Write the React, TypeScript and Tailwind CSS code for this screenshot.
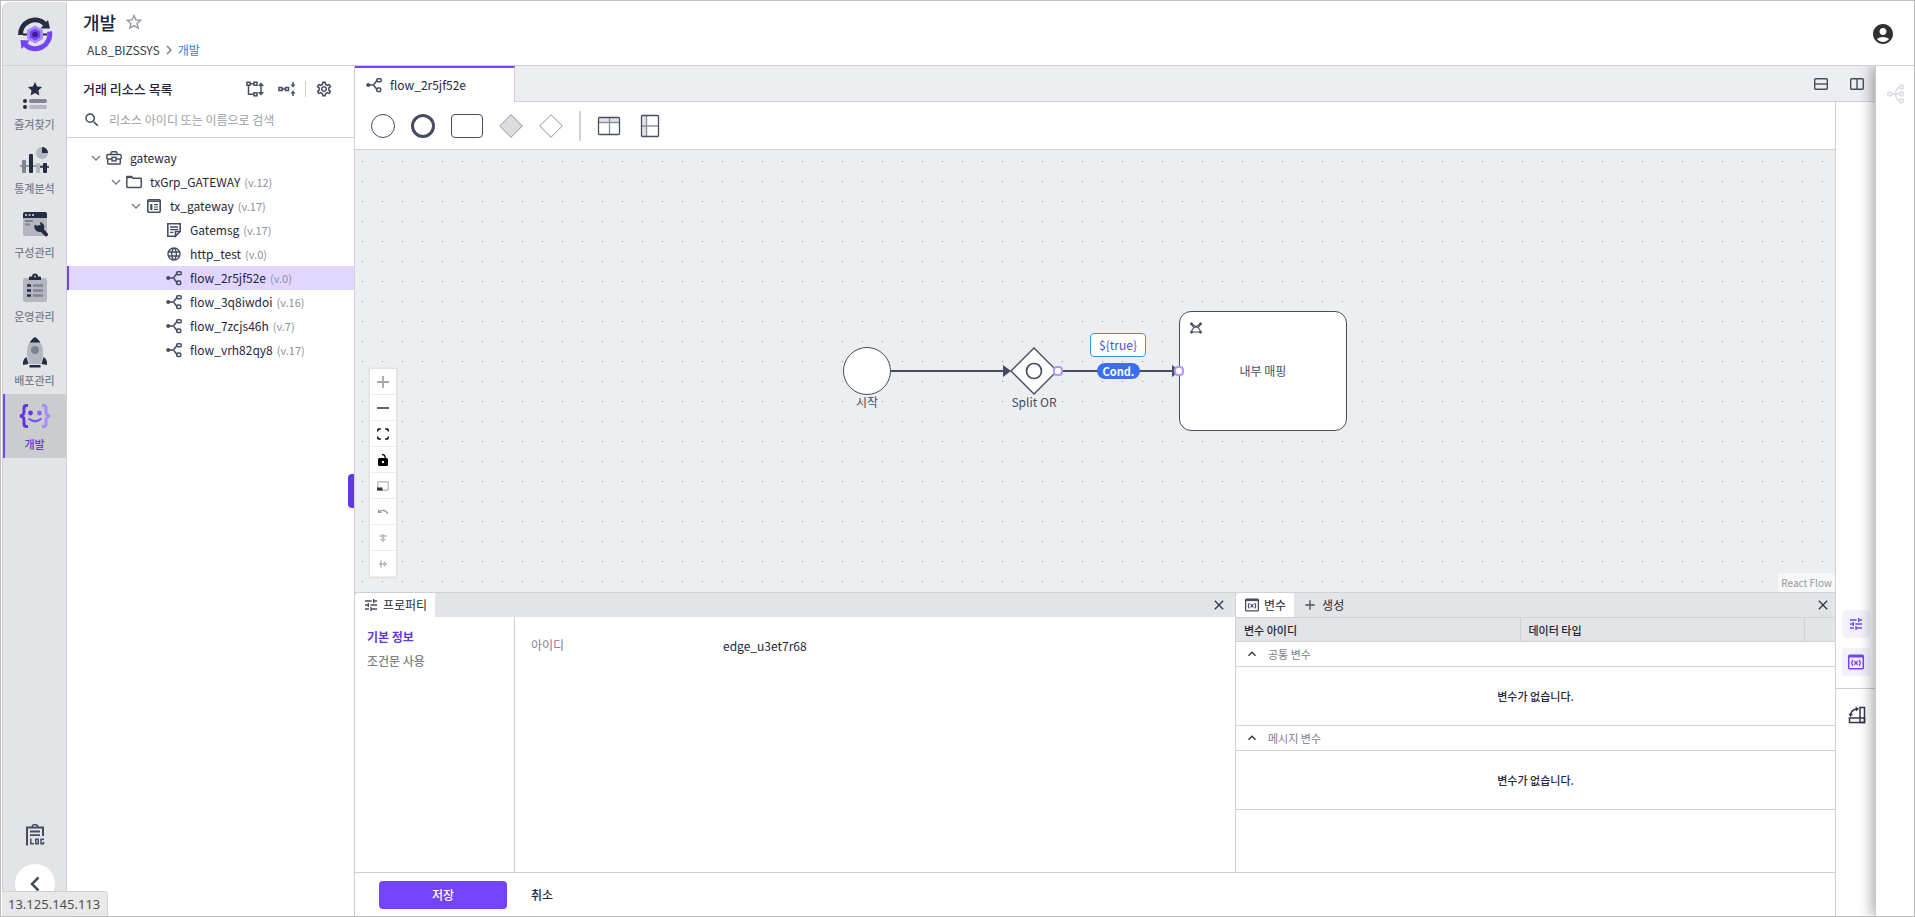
import type { ReactNode } from "react";
import {
  MdAccountCircle,
  MdAdd,
  MdChevronRight,
  MdClose,
  MdExpandLess,
  MdExpandMore,
  MdLanguage,
  MdOutlineSettings,
  MdSearch,
  MdStarBorder,
  MdTune,
} from "react-icons/md";

type IconProps = { className?: string };

function Logo() {
  return (
    <svg viewBox="0 0 36 36" className="h-9 w-9" aria-hidden>
      <path d="M3.500 19A14.500 14.500 0 0 1 28 8" fill="none" stroke="#232c40" strokeWidth="5" />
      <path d="M31 4L33 12.500L23.500 12.500Z" fill="#232c40" />
      <path d="M32.500 15.500A14.500 14.500 0 0 1 8 28.500" fill="none" stroke="#7444fb" strokeWidth="5" />
      <path d="M4.500 33L3.500 24L13 24.500Z" fill="#7444fb" />
      <path d="M6 18.500h24" stroke="#232c40" strokeWidth="2" />
      <path d="M18 9.500l8 4.500v9l-8 4.500l-8-4.500v-9z" fill="#a98bff" />
      <path d="M18 12.500l5.200 3v6l-5.200 3l-5.200-3v-6z" fill="#7444fb" />
      <circle cx="18" cy="18.500" r="2.800" fill="#3a1c96" />
    </svg>
  );
}

function FavoriteIcon() {
  return (
    <svg viewBox="0 0 32 32" className="h-8 w-8" aria-hidden>
      <path d="M16 2l2.100 4.600 5 .5-3.700 3.400 1 5L16 12.900l-4.400 2.600 1-5L8.900 7.100l5-.5z" fill="#232c40" />
      <circle cx="6" cy="21" r="2" fill="#232c40" />
      <circle cx="6" cy="27" r="2" fill="#232c40" />
      <rect x="10" y="19" width="18" height="4" rx="2" fill="#7f8590" />
      <rect x="10" y="25" width="18" height="4" rx="2" fill="#b4b7c0" />
    </svg>
  );
}

function StatsIcon() {
  return (
    <svg viewBox="0 0 32 32" className="h-8 w-8" aria-hidden>
      <circle cx="23" cy="9" r="6" fill="#b4b7c0" />
      <path d="M23 3a6 6 0 0 1 6 6h-6z" fill="#232c40" />
      <path d="M1 22h27" stroke="#7f8590" strokeWidth="1.500" />
      <rect x="3" y="16" width="4" height="13" rx="1" fill="#7f8590" />
      <rect x="10" y="10" width="4" height="19" rx="1" fill="#232c40" />
      <rect x="17" y="19" width="4" height="10" rx="1" fill="#b4b7c0" />
      <path d="M21 23h9" stroke="#232c40" strokeWidth="1.500" />
      <rect x="24" y="19" width="4" height="10" rx="1" fill="#232c40" />
    </svg>
  );
}

function ConfigIcon() {
  return (
    <svg viewBox="0 0 32 32" className="h-8 w-8" aria-hidden>
      <rect x="4" y="4" width="24" height="24" rx="2" fill="#b4b7c0" />
      <path d="M4 10V6a2 2 0 0 1 2-2h20a2 2 0 0 1 2 2v4z" fill="#232c40" />
      <path d="M6 7h2M9.500 7h2M13 7h2" stroke="#e3e4e8" strokeWidth="1.500" />
      <path d="M6 13h8M6 16.500h5" stroke="#7f8590" strokeWidth="1.800" />
      <path d="M20 19l7 7.500" stroke="#232c40" strokeWidth="4" strokeLinecap="round" />
      <path d="M16 16.500l3.500 2.500 2-1.500-.5-3.500a5 5 0 1 1-5 2.500z" fill="#232c40" />
    </svg>
  );
}

function OperationIcon() {
  return (
    <svg viewBox="0 0 32 32" className="h-8 w-8" aria-hidden>
      <rect x="4" y="6" width="24" height="24" rx="2" fill="#b4b7c0" />
      <path d="M10 8V5.500q0-1 1-1h2a3 3 0 0 1 6 0h2q1 0 1 1V8z" fill="#232c40" />
      <circle cx="16" cy="4.500" r="1" fill="#b4b7c0" />
      <path d="M8 13.500h4M8 18.500h4M8 23.500h4" stroke="#232c40" strokeWidth="2.600" />
      <path d="M14 13.500h10M14 18.500h10M14 23.500h10" stroke="#7f8590" strokeWidth="2.600" />
    </svg>
  );
}

function DeployIcon() {
  return (
    <svg viewBox="0 0 32 32" className="h-8 w-8" aria-hidden>
      <path d="M16 1q9 6 8 18l-2 9H10l-2-9Q7 7 16 1z" fill="#b4b7c0" />
      <path d="M16 1q3.500 2 5.500 5.500h-11Q12.500 3 16 1z" fill="#232c40" />
      <circle cx="16" cy="14" r="4" fill="#7f8590" />
      <path d="M7.500 21l2 7-5.500 1v-3q.5-3.500 3.500-5zM24.500 21l-2 7 5.500 1v-3q-.5-3.500-3.500-5z" fill="#232c40" />
      <rect x="10.500" y="29" width="11" height="2.500" fill="#232c40" />
    </svg>
  );
}

function DevelopIcon() {
  return (
    <svg viewBox="0 0 32 32" className="h-8 w-8" fill="none" aria-hidden>
      <path d="M9 5.500H7.500Q5 5.500 5 8v4q0 3.500-4 4 4 .5 4 4v4q0 2.500 2.500 2.500H9" stroke="#6338e0" strokeWidth="3" />
      <path d="M23 5.500h1.500Q27 5.500 27 8v4q0 3.500 4 4-4 .5-4 4v4q0 2.500-2.500 2.500H23" stroke="#a98bff" strokeWidth="3" />
      <circle cx="11.500" cy="13" r="2.400" fill="#6338e0" />
      <path d="M20.500 10.500v5M18.300 11.700l4.400 2.600M22.700 11.700l-4.400 2.600" stroke="#8b62ff" strokeWidth="1.500" />
      <path d="M9.500 18.500q6.500 5.500 13 0" stroke="#7d54f5" strokeWidth="2.200" />
    </svg>
  );
}

function LogIcon() {
  return (
    <svg viewBox="0 0 20 22" className="h-[22px] w-5" fill="none" stroke="#454e61" aria-hidden>
      <path d="M3 20.500H2V3.500h16V12" strokeWidth="2" />
      <path d="M7 3.500a3 3 0 0 1 6 0" strokeWidth="1.500" />
      <path d="M5 7.500h10M5 11.200h10" strokeWidth="1.800" />
      <path d="M5.800 14.500v5.200H9M10.800 15.200h2.400v4.500h-2.400zM19 15.200h-3v4.500h2.500v-2" strokeWidth="1.500" />
    </svg>
  );
}

function CaseIcon({ className }: IconProps) {
  return (
    <svg viewBox="0 0 16 16" className={className} fill="none" stroke="#454e61" strokeWidth="1.400" aria-hidden>
      <path d="M5 4.500V3q0-1.200 1.200-1.200h3.600Q11 1.800 11 3v1.500" />
      <rect x=".8" y="4.500" width="14.400" height="4.500" rx="1" />
      <path d="M1.700 9v4.200q0 .8.800.8h11q.8 0 .8-.8V9" />
      <rect x="6" y="7.300" width="4" height="3.600" fill="#fff" />
    </svg>
  );
}

function FolderIcon({ className }: IconProps) {
  return (
    <svg viewBox="0 0 16 16" className={className} fill="none" stroke="#454e61" strokeWidth="1.500" aria-hidden>
      <path d="M.8 12.800V2.700q0-.2.200-.2h4.500l1.700 1.700h7.800q.2 0 .2.200v8.400q0 .7-.7.700h-13q-.7 0-.7-.7z" />
      <path d="M1 3.200h5" strokeWidth="2" />
    </svg>
  );
}

function FlowIcon({ className }: IconProps) {
  return (
    <svg viewBox="0 0 16 16" className={className} fill="none" stroke="#454e61" strokeWidth="1.500" aria-hidden>
      <circle cx="2.200" cy="8" r="2" fill="#454e61" stroke="none" />
      <path d="M3 8h4.500M7.500 8L10.500 4H12M7.500 8l3 4H12" />
      <rect x="10.700" y="1.800" width="4.500" height="3" rx="1" />
      <rect x="10.700" y="11" width="4" height="3.500" rx="1" />
    </svg>
  );
}

function TxIcon({ className }: IconProps) {
  return (
    <svg viewBox="0 0 16 16" className={className} fill="none" stroke="#454e61" aria-hidden>
      <rect x="1.800" y="1.800" width="12.400" height="12.400" rx="1" strokeWidth="1.600" />
      <path d="M2 3.200h12" strokeWidth="1.500" />
      <path d="M5.300 6v6" strokeWidth="2.200" />
      <path d="M8 6.700h4M8 9h4M8 11.300h4" strokeWidth="1.200" />
    </svg>
  );
}

function MessageIcon({ className }: IconProps) {
  return (
    <svg viewBox="0 0 16 16" className={className} fill="none" stroke="#454e61" strokeWidth="1.600" aria-hidden>
      <path d="M9.500 14.200H1.800V1.800h12.400v7.700l-4.700 4.700V9.500h4.700" />
      <path d="M4 5h8M4 7.700h8M4 10.400h3.500" strokeWidth="1.300" />
    </svg>
  );
}

function ExpandTreeIcon() {
  return (
    <svg viewBox="0 0 18 16" className="h-4 w-[18px]" fill="none" stroke="#454e61" strokeWidth="1.500" aria-hidden>
      <rect x="1" y="1.200" width="3" height="3" />
      <rect x="8" y="1.200" width="3" height="3" />
      <rect x="8" y="11.800" width="3" height="3" />
      <path d="M4 2.700h4M2.500 4v9.300H8M15 3v10M12.700 5L15 2.500 17.300 5M12.700 11l2.300 2.500 2.300-2.500" />
    </svg>
  );
}

function CollapseTreeIcon() {
  return (
    <svg viewBox="0 0 18 16" className="h-4 w-[18px]" fill="none" stroke="#454e61" strokeWidth="1.500" aria-hidden>
      <rect x="1" y="6.500" width="3" height="3" />
      <rect x="7.500" y="6.500" width="3" height="3" />
      <path d="M4 8h3.500M15 1v4M15 15v-4" />
      <path d="M12.500 3.500h5L15 6.500zM12.500 12.500h5L15 9.500z" fill="#454e61" stroke="none" />
    </svg>
  );
}

function VariableIcon({ className }: IconProps) {
  return (
    <svg viewBox="0 0 18 16" className={className} fill="none" stroke="currentColor" aria-hidden>
      <rect x="1.700" y="1.200" width="14.600" height="13.600" rx="1" strokeWidth="1.500" />
      <path d="M2 2.300h14" strokeWidth="2.400" />
      <path d="M5.800 5.800q-2 3 0 6M12.200 5.800q2 3 0 6M7.300 7l3.400 3.800M10.700 7l-3.400 3.800" strokeWidth="1.300" />
    </svg>
  );
}

function PanelToggleIcon() {
  return (
    <svg viewBox="0 0 18 18" className="h-[18px] w-[18px]" fill="none" stroke="#2f384c" strokeWidth="1.500" aria-hidden>
      <rect x="12" y="1.500" width="4.500" height="15" />
      <rect x="1.500" y="12" width="15" height="4.500" />
      <path d="M2.500 9.500Q3 4 8.500 3" />
      <path d="M7.500 .5L11 2.800 8 5.500zM.5 7.500L2.600 11 5 8z" fill="#2f384c" stroke="none" />
    </svg>
  );
}

const menus = [
  { label: "즐겨찾기", icon: <FavoriteIcon /> },
  { label: "통계분석", icon: <StatsIcon /> },
  { label: "구성관리", icon: <ConfigIcon /> },
  { label: "운영관리", icon: <OperationIcon /> },
  { label: "배포관리", icon: <DeployIcon /> },
];

function SideRail() {
  return (
    <nav className="flex w-[65px] shrink-0 flex-col rounded-tl-lg border-x border-[#d0d1d8] bg-[#e3e4e8]">
      <a href="#home" aria-label="홈" className="flex h-16 items-center justify-center border-b border-[#d0d1d8]">
        <Logo />
      </a>
      <div className="flex flex-col pt-2">
        {menus.map((menu) => (
          <a key={menu.label} href="#menu" className="flex h-16 flex-col items-center gap-1 pt-1.5 text-[11px] leading-4 font-medium text-[#7b808c]">
            {menu.icon}
            {menu.label}
          </a>
        ))}
        <a href="#dev" className="flex h-16 flex-col items-center gap-1 border-l-2 border-[#7444fb] bg-[#cbccce] pt-1.5 pr-0.5 text-[11px] leading-4 font-medium text-[#6338e0]">
          <DevelopIcon />
          개발
        </a>
      </div>
      <div className="mt-auto flex flex-col items-center gap-[18px] pb-3">
        <button type="button" aria-label="로그">
          <LogIcon />
        </button>
        <button type="button" aria-label="메뉴 접기" className="flex h-10 w-10 items-center justify-center rounded-full bg-white">
          <svg viewBox="0 0 10 16" className="h-4 w-2.5" fill="none" stroke="#454e61" strokeWidth="2.500" aria-hidden>
            <path d="M8.500 1.500L2 8l6.500 6.500" />
          </svg>
        </button>
      </div>
    </nav>
  );
}

function Header() {
  return (
    <header className="flex h-16 shrink-0 items-center justify-between border-b border-[#d0d1d8] pr-[19px] pl-4">
      <div className="flex flex-col gap-1">
        <div className="flex items-center gap-2">
          <h1 className="text-lg leading-7 font-medium text-[#1f2738]">개발</h1>
          <button type="button" aria-label="즐겨찾기 추가">
            <MdStarBorder className="h-5 w-5 text-[#9296a1]" />
          </button>
        </div>
        <div className="flex items-center pl-1 text-xs leading-5">
          <a href="#sys" className="text-[#333b4d]">AL8_BIZSSYS</a>
          <MdChevronRight className="h-[18px] w-[18px] text-[#7b808c]" />
          <a href="#dev" className="text-[#1e88e5]">개발</a>
        </div>
      </div>
      <button type="button" aria-label="내 계정">
        <MdAccountCircle className="h-6 w-6 text-[#303030]" />
      </button>
    </header>
  );
}

const iconClass = "h-4 w-4 shrink-0 text-[#454e61]";

const tree = [
  { name: "gateway", indent: "pl-[18px]", open: true, icon: <CaseIcon className={iconClass} /> },
  { name: "txGrp_GATEWAY", version: "(v.12)", indent: "pl-[38px]", open: true, icon: <FolderIcon className={iconClass} /> },
  { name: "tx_gateway", version: "(v.17)", indent: "pl-[58px]", open: true, icon: <TxIcon className={iconClass} /> },
  { name: "Gatemsg", version: "(v.17)", indent: "pl-[97px]", icon: <MessageIcon className={iconClass} /> },
  { name: "http_test", version: "(v.0)", indent: "pl-[97px]", icon: <MdLanguage className={iconClass} /> },
  { name: "flow_2r5jf52e", version: "(v.0)", indent: "pl-[97px]", selected: true, icon: <FlowIcon className={iconClass} /> },
  { name: "flow_3q8iwdoi", version: "(v.16)", indent: "pl-[97px]", icon: <FlowIcon className={iconClass} /> },
  { name: "flow_7zcjs46h", version: "(v.7)", indent: "pl-[97px]", icon: <FlowIcon className={iconClass} /> },
  { name: "flow_vrh82qy8", version: "(v.17)", indent: "pl-[97px]", icon: <FlowIcon className={iconClass} /> },
];

function ResourcePanel() {
  return (
    <aside className="relative w-72 shrink-0 border-r border-[#d0d1d8]">
      <div className="flex flex-col gap-1.5 border-b border-[#d0d1d8] pt-[11px] pb-[5px]">
        <div className="flex h-6 items-center pr-[21px] pl-4">
          <h2 className="flex-1 text-[13px] font-medium text-[#1f2738]">거래 리소스 목록</h2>
          <button type="button" aria-label="모두 펼치기"><ExpandTreeIcon /></button>
          <button type="button" aria-label="모두 접기" className="ml-3.5"><CollapseTreeIcon /></button>
          <span className="mx-[9px] h-4 w-px bg-[#d0d1d8]" />
          <button type="button" aria-label="설정"><MdOutlineSettings className="h-[18px] w-[18px] text-[#454e61]" /></button>
        </div>
        <label className="flex h-[25px] items-center gap-2 px-4">
          <MdSearch className="h-[18px] w-[18px] text-[#454e61]" aria-hidden />
          <input
            type="text"
            aria-label="리소스 검색"
            placeholder="리소스 아이디 또는 이름으로 검색"
            className="flex-1 text-xs outline-none placeholder:text-[#9b9fa9]"
          />
        </label>
      </div>
      <ul className="pt-2 text-xs text-[#1f2738]">
        {tree.map((node) => (
          <li
            key={node.name}
            className={`flex h-6 items-center border-l-2 ${node.indent} ${node.selected ? "border-[#7444fb] bg-[#e0d6ff]" : "border-transparent"}`}
          >
            {node.open && (
              <button type="button" aria-label={`${node.name} 접기`} className="mr-px">
                <MdExpandMore className="h-[18px] w-[18px] text-[#7b808c]" />
              </button>
            )}
            {node.icon}
            <span className="ml-2">{node.name}</span>
            {node.version && <span className="ml-1 text-[11px] text-[#8d919b]">{node.version}</span>}
          </li>
        ))}
      </ul>
      <button type="button" aria-label="목록 접기" className="absolute top-[408px] right-0 h-[34px] w-1.5 rounded-l bg-[#6338e0]" />
    </aside>
  );
}

function TabBar() {
  return (
    <div className="flex h-9 shrink-0">
      <button type="button" className="flex w-40 items-center gap-2 border-t-2 border-r border-t-[#7444fb] border-r-[#d0d1d8] bg-white pl-[11px] text-xs text-[#1f2738]">
        <FlowIcon className={iconClass} />
        flow_2r5jf52e
      </button>
      <div className="flex flex-1 items-center justify-end gap-[22px] border-b border-[#d0d1d8] bg-[#edeef0] pr-[11px]">
        <button type="button" aria-label="가로 분할">
          <svg viewBox="0 0 14 12" className="h-3 w-3.5" fill="none" stroke="#454e61" strokeWidth="1.400" aria-hidden>
            <rect x=".7" y=".7" width="12.600" height="10.600" rx="1" />
            <path d="M1 6h12" />
          </svg>
        </button>
        <button type="button" aria-label="세로 분할">
          <svg viewBox="0 0 14 12" className="h-3 w-3.5" fill="none" stroke="#454e61" strokeWidth="1.400" aria-hidden>
            <rect x=".7" y=".7" width="12.600" height="10.600" rx="1" />
            <path d="M7 1v10" />
          </svg>
        </button>
      </div>
    </div>
  );
}

function Toolbar() {
  return (
    <div className="flex h-12 shrink-0 items-center gap-4 border-b border-[#d0d1d8] bg-white pl-4">
      <button type="button" aria-label="시작" className="h-6 w-6 rounded-full border border-[#454e61]" />
      <button type="button" aria-label="종료" className="h-6 w-6 rounded-full border-3 border-[#454e61]" />
      <button type="button" aria-label="작업" className="h-6 w-8 rounded border border-[#454e61]" />
      <button type="button" aria-label="분기">
        <svg viewBox="0 0 24 24" className="h-6 w-6" fill="#dcdde1" stroke="#8d919b" aria-hidden>
          <path d="M12 .7L23.300 12 12 23.300.7 12z" />
        </svg>
      </button>
      <button type="button" aria-label="병합">
        <svg viewBox="0 0 24 24" className="h-6 w-6" fill="#fff" stroke="#8d919b" aria-hidden>
          <path d="M12 .7L23.300 12 12 23.300.7 12z" />
        </svg>
      </button>
      <span className="h-[30px] w-0.5 bg-[#d0d1d8]" />
      <button type="button" aria-label="가로 레인">
        <svg viewBox="0 0 24 20" className="h-5 w-6" fill="#fff" stroke="#454e61" aria-hidden>
          <path d="M1.500 2h21v4.500h-21z" fill="#e3e4e8" stroke="none" />
          <path d="M2 6.500h20M12.500 2v16" stroke="#8d919b" strokeWidth="1.400" />
          <rect x="1.500" y="1.500" width="21" height="17" rx="1" fill="none" strokeWidth="1.300" />
        </svg>
      </button>
      <button type="button" aria-label="세로 레인">
        <svg viewBox="0 0 24 24" className="h-6 w-6" fill="#fff" stroke="#454e61" aria-hidden>
          <path d="M4 2h5v20H4z" fill="#e3e4e8" stroke="none" />
          <path d="M9.500 2v20M4 12h17" stroke="#8d919b" strokeWidth="1.400" />
          <rect x="4.500" y="1.500" width="17" height="21" rx="1" fill="none" strokeWidth="1.300" />
        </svg>
      </button>
    </div>
  );
}

function ControlButton({ label, children }: { label: string; children: ReactNode }) {
  return (
    <button type="button" aria-label={label} className="flex h-[26px] w-[26px] items-center justify-center border-b border-[#eee] bg-white">
      <svg viewBox="0 0 12 12" className="h-3 w-3" aria-hidden>
        {children}
      </svg>
    </button>
  );
}

function Canvas() {
  return (
    <div className="relative flex-1 overflow-hidden bg-[#edeef0] text-xs text-[#454e61]">
      <svg className="absolute inset-0 h-full w-full" aria-hidden>
        <pattern id="dots" x="7" y="11" width="20" height="20" patternUnits="userSpaceOnUse">
          <rect width="1" height="1" fill="#91919a" />
        </pattern>
        <rect width="100%" height="100%" fill="url(#dots)" />
        <path d="M536 221h112M708 221h116" stroke="#454e61" strokeWidth="2" />
        <path d="M648 215l8 6-8 6zM817 215l8 6-8 6z" fill="#454e61" />
        <path d="M679 198l23 23-23 23-23-23z" fill="#fff" stroke="#454e61" strokeWidth="1.400" />
        <circle cx="679" cy="221" r="7.500" fill="none" stroke="#454e61" strokeWidth="1.700" />
      </svg>

      <div className="absolute top-[197px] left-[488px] h-12 w-12 rounded-full border border-[#454e61] bg-white" />
      <span className="absolute top-[243px] left-[480px] w-16 text-center leading-[18px]">시작</span>
      <span className="absolute top-[243px] left-[639px] w-20 text-center leading-[18px]">Split OR</span>
      <span className="absolute top-[183px] left-[735px] flex h-6 w-14 items-center justify-center rounded border border-[#2f9bf0] bg-white text-[#3b5bc8]">
        {"${true}"}
      </span>
      <span className="absolute top-[213px] left-[742px] flex h-4 w-[43px] items-center justify-center rounded-full bg-[#3b6ef0] text-[11px] font-bold text-white">
        Cond.
      </span>
      <div className="absolute top-[161px] left-[824px] flex h-[120px] w-[168px] items-center justify-center rounded-xl border border-[#454e61] bg-white">
        내부 매핑
        <svg viewBox="0 0 12 12" className="absolute top-2.5 left-2.5 h-3 w-3" fill="#454e61" stroke="#454e61" aria-hidden>
          <path d="M1.500 1.800l4.500 3 4.500-3M1.500 10h9M2 2v1.500l2 2-2 2.500v2M10 2v1.500l-2 2 2 2.500v2M4 5.300h4" fill="none" strokeWidth="1.100" />
          <circle cx="1.500" cy="1.800" r="1" />
          <circle cx="10.500" cy="1.800" r="1" />
          <circle cx="1.500" cy="10.200" r="1" />
          <circle cx="10.500" cy="10.200" r="1" />
        </svg>
      </div>
      <span className="absolute top-[216px] left-[698px] h-2.5 w-2.5 rounded-sm border-2 border-[#b098fb] bg-white" />
      <span className="absolute top-[216px] left-[819px] h-2.5 w-2.5 rounded-sm border-2 border-[#b098fb] bg-white" />

      <div className="absolute bottom-[15px] left-[15px] flex flex-col shadow-[0_0_2px_1px_rgba(0,0,0,0.08)]">
        <ControlButton label="확대"><path d="M6 0v12M0 6h12" stroke="#a6a6a6" strokeWidth="1.800" /></ControlButton>
        <ControlButton label="축소"><path d="M0 6h12" stroke="#000" strokeWidth="1.200" /></ControlButton>
        <ControlButton label="화면 맞춤">
          <path d="M.8 3.500V2q0-1 1-1h2M8.200 1h2q1 0 1 1v1.500M11.200 8.500V10q0 1-1 1h-2M3.800 11h-2q-1 0-1-1V8.500" fill="none" stroke="#000" strokeWidth="1.400" />
        </ControlButton>
        <ControlButton label="잠금 해제">
          <path d="M2.500 4h7q1.500 0 1.500 1.500v5Q11 12 9.500 12h-7Q1 12 1 10.500v-5Q1 4 2.500 4z" />
          <path d="M5 .8q3-.8 3.300 3.500" fill="none" stroke="#000" strokeWidth="1.200" />
          <circle cx="6" cy="8" r="1.200" fill="#fff" />
        </ControlButton>
        <ControlButton label="미니맵">
          <rect x=".7" y="1.700" width="10.600" height="8.600" rx="1" fill="none" stroke="#bdbdbd" strokeWidth="1.400" />
          <rect x="0" y="7.500" width="5.500" height="3" fill="#333" />
        </ControlButton>
        <ControlButton label="실행 취소">
          <path d="M1 3v4h4z" fill="#9a9a9a" />
          <path d="M2.500 6q4-4 8.500 1.500" fill="none" stroke="#9a9a9a" strokeWidth="1.300" />
        </ControlButton>
        <ControlButton label="가로 정렬">
          <path d="M2.500 4h7M3.500 7.500h5" stroke="#b4b7c0" strokeWidth="1.500" />
          <path d="M6 2v8" stroke="#b4b7c0" strokeWidth="1.500" />
        </ControlButton>
        <ControlButton label="세로 정렬">
          <path d="M4 2.500v7M7.500 3.500v5" stroke="#b4b7c0" strokeWidth="1.500" />
          <path d="M2 6h8" stroke="#b4b7c0" strokeWidth="1.500" />
        </ControlButton>
      </div>
      <a href="#reactflow" className="absolute right-0 bottom-0 bg-white/50 px-[3px] py-0.5 text-[10px] leading-[15px] text-[#999]">
        React Flow
      </a>
    </div>
  );
}

function PropertyPanel() {
  return (
    <section className="flex min-w-0 flex-col">
      <div className="flex h-6 items-center bg-[#e3e4e8]">
        <button type="button" className="flex h-full w-20 items-center gap-1 rounded-tl bg-white pl-2 text-xs text-[#1f2738]">
          <MdTune className="h-4 w-4 text-[#454e61]" />
          프로퍼티
        </button>
        <button type="button" aria-label="프로퍼티 닫기" className="mr-2 ml-auto">
          <MdClose className="h-4 w-4 text-[#2f384c]" />
        </button>
      </div>
      <div className="flex flex-1">
        <nav className="flex w-40 shrink-0 flex-col border-r border-[#d0d1d8] pt-2 pl-3 text-xs leading-6">
          <a href="#basic" className="font-bold text-[#6338e0]">기본 정보</a>
          <a href="#condition" className="font-medium text-[#7b808c]">조건문 사용</a>
        </nav>
        <dl className="flex flex-1 pt-[17px] pl-4 text-xs leading-6">
          <dt className="w-48 leading-[22px] text-[#7b808c]">아이디</dt>
          <dd className="text-[#1f2738]">edge_u3et7r68</dd>
        </dl>
      </div>
    </section>
  );
}

function VariablePanel() {
  return (
    <section className="min-w-0 border-l border-[#d0d1d8]">
      <div className="flex h-[25px] items-center border-b border-[#d0d1d8] bg-[#e3e4e8] text-xs text-[#1f2738]">
        <button type="button" className="flex h-full items-center gap-1 rounded-tl bg-white pr-2 pl-2">
          <VariableIcon className="h-3.5 w-4 text-[#454e61]" />
          변수
        </button>
        <button type="button" className="flex items-center gap-1 pl-2">
          <MdAdd className="h-4 w-4 text-[#454e61]" />
          생성
        </button>
        <button type="button" aria-label="변수 닫기" className="mr-1 ml-auto">
          <MdClose className="h-4 w-4 text-[#2f384c]" />
        </button>
      </div>
      <table className="w-full table-fixed border-separate border-spacing-0 text-[11px] leading-4 text-[#1f2738]">
        <thead>
          <tr className="bg-[#e3e4e8] text-left">
            <th className="h-6 border-r border-b border-[#d0d1d8] px-2 py-0 font-medium">변수 아이디</th>
            <th className="border-r border-b border-[#d0d1d8] px-2 py-0 font-medium">데이터 타입</th>
            <td className="w-[30px] border-b border-[#d0d1d8] p-0" />
          </tr>
        </thead>
        {["공통 변수", "메시지 변수"].map((group) => (
          <tbody key={group}>
            <tr>
              <td colSpan={3} className="h-[25px] border-b border-[#d0d1d8] px-2 py-0 text-[#7b808c]">
                <button type="button" className="flex items-center gap-2">
                  <MdExpandLess className="h-4 w-4 text-[#2f384c]" />
                  {group}
                </button>
              </td>
            </tr>
            <tr>
              <td colSpan={3} className="h-[59px] border-b border-[#d0d1d8] p-0 text-center font-medium">
                변수가 없습니다.
              </td>
            </tr>
          </tbody>
        ))}
      </table>
    </section>
  );
}

function ToolStrip() {
  return (
    <div className="flex w-10 shrink-0 flex-col border-l border-[#d0d1d8] bg-white">
      <div className="mt-auto flex flex-col gap-2.5 border-b border-[#d0d1d8] pb-3 pl-1.5">
        <button type="button" aria-label="프로퍼티 패널" className="flex h-7 w-7 items-center justify-center rounded bg-[#f4f1ff] text-[#7444fb]">
          <MdTune className="h-4 w-4" />
        </button>
        <button type="button" aria-label="변수 패널" className="flex h-7 w-7 items-center justify-center rounded bg-[#f4f1ff] text-[#7444fb]">
          <VariableIcon className="h-4 w-[18px]" />
        </button>
      </div>
      <div className="h-[227px] pt-4 pl-3">
        <button type="button" aria-label="패널 위치 변경">
          <PanelToggleIcon />
        </button>
      </div>
    </div>
  );
}

function Drawer() {
  return (
    <aside className="w-[39px] shrink-0 border-l border-[#c8c9cf] bg-white pt-[18px] pl-[11px] shadow-[-4px_0_12px_rgba(0,0,0,0.3)]">
      <button type="button" aria-label="흐름 보기">
        <svg viewBox="0 0 18 20" className="h-5 w-[18px]" fill="none" stroke="#dcdee3" strokeWidth="1.700" aria-hidden>
          <circle cx="2.700" cy="10" r="1.900" />
          <circle cx="14.500" cy="3" r="1.900" />
          <circle cx="14.500" cy="10" r="1.900" />
          <circle cx="14.500" cy="17" r="1.900" />
          <path d="M4.600 10h8M12.600 3Q9 4 8.500 10q.5 6 4.100 7" />
        </svg>
      </button>
    </aside>
  );
}

export default function App() {
  return (
    <div className="relative flex h-screen w-full overflow-hidden border border-[#bdbdbd] bg-white pt-px pl-px font-['Noto_Sans_CJK_KR',sans-serif]">
      <SideRail />
      <div className="flex min-w-0 flex-1 flex-col">
        <Header />
        <div className="flex min-h-0 flex-1 overflow-hidden">
          <ResourcePanel />
          <main className="flex min-w-0 flex-1 flex-col">
            <TabBar />
            <div className="flex min-h-0 flex-1">
              <div className="flex min-w-0 flex-1 flex-col">
                <Toolbar />
                <Canvas />
                <div className="grid h-[280px] shrink-0 grid-cols-[22fr_15fr] border-t border-[#d0d1d8]">
                  <PropertyPanel />
                  <VariablePanel />
                </div>
                <div className="flex h-11 shrink-0 items-center gap-6 border-t border-[#d0d1d8] pl-6 text-xs font-medium">
                  <button type="button" className="h-7 w-32 rounded bg-[#7444fb] text-white">저장</button>
                  <button type="button" className="text-[#1f2738]">취소</button>
                </div>
              </div>
              <ToolStrip />
            </div>
          </main>
          <Drawer />
        </div>
      </div>
      <div className="absolute bottom-0 left-px rounded-tr border-t border-r border-[#cfcfcf] bg-[#e8e8e8]/95 pr-[7px] pl-1.5 font-['Noto_Sans',sans-serif] text-[13px] leading-6 text-[#4f4f4f]">
        13.125.145.113
      </div>
    </div>
  );
}
